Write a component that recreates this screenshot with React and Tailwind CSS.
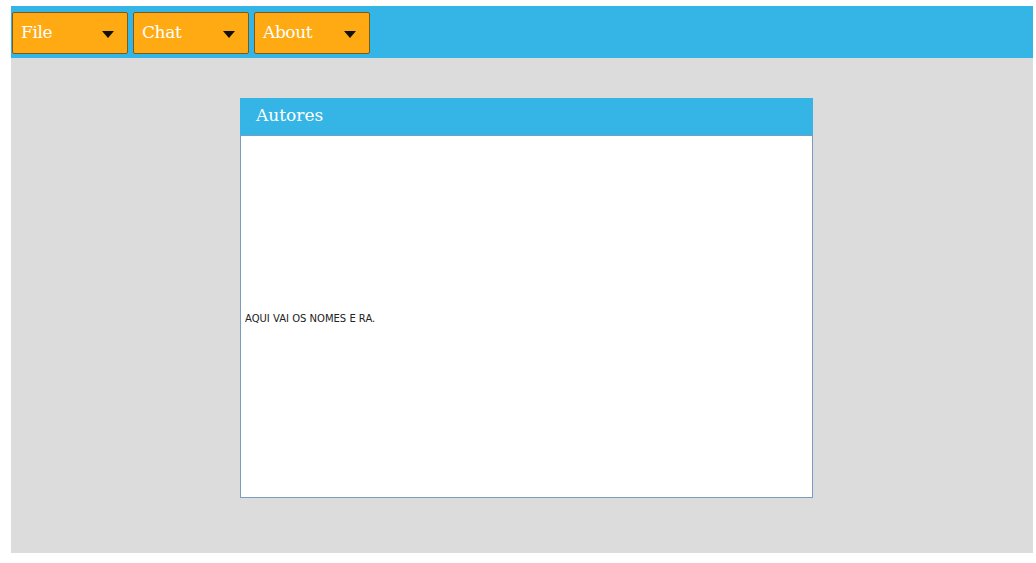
const menus = ['File', 'Chat', 'About'];

const MenuButton = ({ label }) => (
  <button
    type="button"
    className="flex h-[42px] w-[116px] items-center justify-between rounded-[2px] border border-[#7a5a1a] bg-[#ffaa12] pl-[8px] pr-[13px] text-[17px] text-white"
    style={{ fontFamily: '"DejaVu Serif", "Liberation Serif", serif' }}
  >
    <span className="tracking-[-0.4px]">{label}</span>
    <svg width="12" height="7" viewBox="0 0 12 7" className="mt-[2px]">
      <path d="M0 0 H12 L6 7 Z" fill="#111" />
    </svg>
  </button>
);

const App = () => {
  return (
    <div className="h-[563px] bg-white pt-[6px] pl-[11px] pr-[3px]">
      <div className="flex h-[547px] flex-col bg-[#dcdcdc]">
        <div className="flex h-[52px] items-start gap-[5px] bg-[#35b5e5] pt-[6px] pl-[1px]">
          {menus.map((m) => (
            <MenuButton key={m} label={m} />
          ))}
        </div>
        <div className="flex pt-[40px] pl-[229px]">
          <div className="flex w-[573px] flex-col">
            <div
              className="flex h-[38px] items-center border-b border-[#7a9cc0] bg-[#35b5e5] pb-[2px] pl-[16px] text-[17px] text-white"
              style={{ fontFamily: '"DejaVu Serif", "Liberation Serif", serif' }}
            >
              Autores
            </div>
            <div className="flex h-[362px] items-center border border-t-0 border-[#7a9cc0] bg-white pt-[4px] pl-[4px]">
              <span
                className="text-[10px] text-[#222]"
                style={{ fontFamily: '"DejaVu Sans", sans-serif' }}
              >
                AQUI VAI OS NOMES E RA.
              </span>
            </div>
          </div>
        </div>
      </div>
    </div>
  );
};

export default App;
